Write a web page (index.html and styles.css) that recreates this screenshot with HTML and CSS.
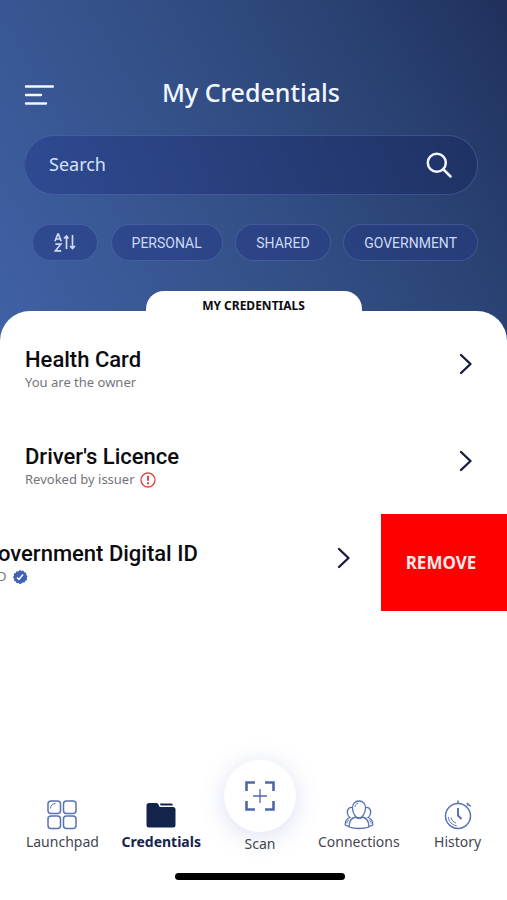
FILE: index.html
```html
<!DOCTYPE html>
<html lang="en">
<head>
<meta charset="utf-8">
<meta name="viewport" content="width=device-width, initial-scale=1">
<title>My Credentials</title>
<link rel="stylesheet" href="styles.css">
</head>
<body>
<header class="top">
  <div class="controls">
    <div class="title-bar">
      <button class="icon-button" type="button" aria-label="Menu">
        <svg width="30" height="20" viewBox="0 0 30 20" fill="none" stroke="currentColor" stroke-width="2.4" stroke-linecap="round"><path d="M2 1.500h27M2 10h15M2 18.500h20"/></svg>
      </button>
      <h1>My Credentials</h1>
    </div>
    <form class="search">
      <input type="text" placeholder="Search" aria-label="Search">
      <button class="icon-button" type="submit" aria-label="Submit search">
        <svg width="26" height="26" viewBox="0 0 26 26" fill="none" stroke="currentColor" stroke-width="2.5" stroke-linecap="round"><circle cx="10.800" cy="10.800" r="9"/><path d="M17.500 17.500l7 7"/></svg>
      </button>
    </form>
    <div class="filters">
      <button class="chip chip-sort" type="button" aria-label="Sort A to Z">
        <svg width="22" height="19" viewBox="0 0 22 19" fill="none" stroke="currentColor" stroke-width="1.700"><path d="M1 8.200L3.800 1h.6L7.200 8.200M2 6h4.200M1.400 11.200h5.400L1.400 17.800h5.800"/><path d="M12.500 16V3M10 5.500L12.500 3l2 2.500M18.500 2v13.500M16 13l2.500 2.500L21 13"/></svg>
      </button>
      <button class="chip" type="button">PERSONAL</button>
      <button class="chip" type="button">SHARED</button>
      <button class="chip" type="button">GOVERNMENT</button>
    </div>
  </div>
  <h2 class="tab">MY CREDENTIALS</h2>
</header>

<main class="sheet">
  <ul class="list">
    <li class="row">
      <a class="card" href="#health">
        <span class="card-text">
          <strong>Health Card</strong>
          <span class="note">You are the owner</span>
        </span>
        <svg class="chevron" width="14" height="22" viewBox="0 0 14 22"><path d="M2 2l9.500 9L2 20"/></svg>
      </a>
    </li>
    <li class="row">
      <a class="card" href="#licence">
        <span class="card-text">
          <strong>Driver's Licence</strong>
          <span class="note">Revoked by issuer
            <svg width="16" height="16" viewBox="0 0 16 16" fill="none" stroke="#e04848"><circle cx="8" cy="8" r="7" stroke-width="1.400"/><path d="M8 3.800v5" stroke-width="2"/><path d="M8 10.300v2" stroke-width="2"/></svg>
          </span>
        </span>
        <svg class="chevron" width="14" height="22" viewBox="0 0 14 22"><path d="M2 2l9.500 9L2 20"/></svg>
      </a>
    </li>
    <li class="row swiped">
      <a class="card" href="#government">
        <span class="card-text">
          <strong>Government Digital ID</strong>
          <span class="note">D
            <svg width="16" height="16" viewBox="0 0 16 16"><path d="M8 .8l1.500 1.200 1.900-.4.900 1.700 1.900.5v1.900l1.300 1.500L14.800 9l.3 1.900-1.700.9-.8 1.800-1.900-.1L9 14.800 8 15.200l-1.500-1.100-1.900.2-.8-1.700-1.800-.8.200-1.900L1 8.300l1-1.600-.2-1.900 1.800-.8.900-1.700 1.900.2z" fill="#3f62b5"/><path d="M5 8.500l2 2L11 5.500" fill="none" stroke="#fff" stroke-width="1.500"/></svg>
          </span>
        </span>
        <svg class="chevron" width="14" height="22" viewBox="0 0 14 22"><path d="M2 2l9.500 9L2 20"/></svg>
      </a>
      <button class="remove" type="button">REMOVE</button>
    </li>
  </ul>
</main>

<footer class="bottom">
  <nav class="tabs">
    <a href="#launchpad">
      <svg width="30" height="30" viewBox="0 0 30 30" fill="none" stroke="#5872b5" stroke-width="1.500"><rect x="1" y="1" width="12.500" height="12.500" rx="3"/><rect x="16.500" y="1" width="12.500" height="12.500" rx="3"/><rect x="1" y="16" width="12.500" height="12.500" rx="3"/><rect x="16.500" y="16" width="12.500" height="12.500" rx="3"/><path d="M3.500 8.500c0-3 2-5 5-5" stroke-width="1"/></svg>
      Launchpad
    </a>
    <a class="current" href="#credentials" aria-current="page">
      <svg width="30" height="30" viewBox="0 0 30 30" fill="#13244c"><path d="M3 3h7.500q1.500 0 2 1.500l.5 1.500q.4 1 1.500 1H27q2.500 0 2.500 2.500V25q0 2.500-2.500 2.500H3Q.5 27.500.5 25V5.500Q.5 3 3 3z"/><path d="M14 3.500h11.500q1.200.2 1.500 2H15q-.8-.2-1-2z"/></svg>
      Credentials
    </a>
    <a class="scan" href="#scan">
      <span class="scan-disc">
        <svg width="30" height="30" viewBox="0 0 30 30" fill="none" stroke="#5068aa"><path d="M1.500 10V1.500H10M20 1.500h8.500V10M28.500 20v8.500H20M10 28.500H1.500V20" stroke-width="2.600"/><path d="M15 8v14M8 15h14" stroke-width="1.300"/></svg>
      </span>
      Scan
    </a>
    <a href="#connections">
      <svg width="30" height="30" viewBox="0 0 30 30" fill="#fff" stroke="#5872b5" stroke-width="1.300"><path d="M10 8C6 6 2.500 9 3.500 13.500c.3 1.800 1.300 3.300 2.500 4-3 1-5 3.500-4.800 7.500 1.500 1 4 1.500 6 1.500M20 8c4-2 7.500 1 6.500 5.500-.3 1.800-1.300 3.300-2.500 4 3 1 5 3.500 4.800 7.500-1.500 1-4 1.500-6 1.500"/><path d="M2.800 23.500c.2-2 1-3 2.200-3.700M27.200 23.500c-.2-2-1-3-2.200-3.700" stroke-width="1"/><path d="M11.500 17c-4 1-6.500 4.500-6.300 10 5 2 14.600 2 19.600 0 .2-5.500-2.300-9-6.300-10-1.500 1.800-5.500 1.800-7 0z"/><path d="M15 1c-4.200 0-6.800 3-6.500 7.500.3 5 3.200 9.500 6.500 9.500s6.200-4.500 6.500-9.500C21.800 4 19.200 1 15 1z"/><path d="M11 7c.2-2 1.200-3.300 3-3.700" fill="none" stroke-width="1"/></svg>
      Connections
    </a>
    <a href="#history">
      <svg width="30" height="30" viewBox="0 0 30 30" fill="none" stroke="#5872b5" stroke-width="1.500"><circle cx="15" cy="16" r="12.500"/><path d="M15 3.500V.5M24 5.500l1.700-1.700M23.800 3l4 3.500"/><path d="M15 8v7.500l3.500 3.500" stroke-width="2"/><path d="M5.300 17c.3 4.500 4 8.300 8.500 8.800M8 17.500c.5 2.500 2.500 4.800 5 5.500" stroke-width="1"/></svg>
      History
    </a>
  </nav>
  <div class="home-bar"></div>
</footer>
</body>
</html>
```
FILE: styles.css
```css
* {
  box-sizing: border-box;
}

body {
  margin: 0;
  min-height: 100vh;
  display: flex;
  flex-direction: column;
  overflow-x: hidden;
  background: #fff;
  color: #0b0b10;
  font-family: "Noto Sans", "Open Sans", sans-serif;
}

button,
input {
  font: inherit;
  color: inherit;
  border: 0;
  background: none;
  padding: 0;
}

a {
  color: inherit;
  text-decoration: none;
}

svg {
  display: block;
  flex: none;
}

/* The blue header continues behind the rounded corners of the sheet. */
.top {
  padding: 72px 0 40px;
  color: #f1f6ff;
  background: linear-gradient(60deg, #4061a5 0%, #345088 45%, #294272 75%, #21305d 100%);
}

.controls {
  padding: 0 29px 0 24px;
}

.title-bar {
  display: grid;
  grid-template-columns: 32px 1fr 32px;
  align-items: center;
  height: 40px;
}

.title-bar .icon-button {
  padding-top: 6px;
}

h1 {
  margin: 0;
  text-align: center;
  font-size: 25px;
  font-weight: 500;
  line-height: 40px;
}

.search {
  display: flex;
  align-items: center;
  height: 60px;
  margin-top: 23px;
  padding: 0 25px 0 24px;
  border: 1px solid rgba(120, 150, 215, 0.3);
  border-radius: 30px;
  background: linear-gradient(75deg, rgba(40, 64, 140, 0.6), rgba(29, 46, 98, 0.7));
}

.search input {
  flex: 1;
  min-width: 0;
  height: 40px;
  padding-bottom: 3px;
  font-size: 18px;
  outline: none;
}

.search input::placeholder {
  color: #d5e2fb;
  opacity: 1;
}

.filters {
  display: flex;
  justify-content: space-between;
  margin-top: 29px;
  padding-left: 8px;
}

.chip {
  display: flex;
  align-items: center;
  justify-content: center;
  height: 37px;
  padding: 0 20px;
  border: 1px solid rgba(120, 150, 215, 0.3);
  border-radius: 19px;
  background: rgba(36, 56, 130, 0.5);
  color: #ccdaf6;
  font-family: Roboto, sans-serif;
  font-size: 14px;
}

.chip-sort {
  padding: 0 21px;
}

.tab {
  width: 216px;
  height: 49px;
  margin: 30px auto -40px;
  border-radius: 18px 18px 0 0;
  background: #fff;
  color: #0b0b10;
  text-align: center;
  font-size: 12px;
  line-height: 30px;
}

.sheet {
  flex: 1;
  margin-top: -29px;
  padding-top: 9px;
  border-radius: 30px 30px 0 0;
  background: #fff;
}

.list {
  margin: 0;
  padding: 0;
  list-style: none;
}

.row {
  display: flex;
  height: 97px;
  overflow: hidden;
}

.card {
  display: flex;
  flex: 1;
  align-items: center;
  justify-content: space-between;
  padding: 0 34px 10px 25px;
}

.card-text {
  display: flex;
  flex-direction: column;
  padding-top: 12px;
}

.card strong {
  font-family: Roboto, sans-serif;
  font-size: 22px;
  font-weight: 500;
  line-height: 26px;
  white-space: nowrap;
}

.note {
  display: flex;
  align-items: center;
  gap: 5px;
  color: #74747a;
  font-size: 13px;
  line-height: 19px;
}

.chevron {
  fill: none;
  stroke: #1a1d40;
  stroke-width: 2.4;
  stroke-linecap: round;
  stroke-linejoin: round;
}

.swiped .card {
  margin-left: -42px;
  padding-right: 30px;
}

.swiped .note {
  padding-left: 14px;
}

.remove {
  width: 126px;
  padding-right: 6px;
  background: #fe0000;
  color: #ffe9e9;
  font-size: 17px;
  font-weight: 700;
}

.bottom {
  padding: 0 0 20px 13px;
}

.tabs {
  display: grid;
  grid-template-columns: repeat(5, 1fr);
  align-items: end;
}

.tabs a {
  display: flex;
  flex-direction: column;
  align-items: center;
  gap: 2px;
  padding-bottom: 2px;
  color: #44464f;
  font-size: 14px;
  line-height: 20px;
}

.tabs .current {
  color: #17244a;
  font-weight: 700;
}

.tabs .scan {
  padding-bottom: 0;
}

.scan-disc {
  display: grid;
  place-items: center;
  width: 72px;
  height: 72px;
  border-radius: 50%;
  background: #fff;
  box-shadow: 0 4px 24px rgba(90, 110, 200, 0.22);
}

.home-bar {
  width: 170px;
  height: 7px;
  margin: 19px auto 0;
  border-radius: 4px;
  background: #000;
}
```
